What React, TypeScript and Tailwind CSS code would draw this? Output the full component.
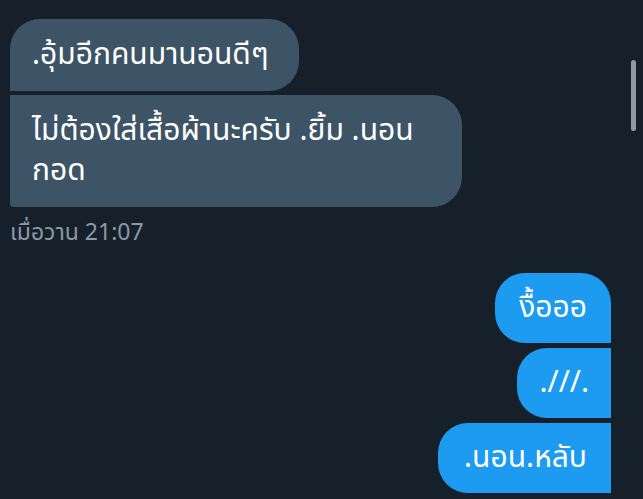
import React from "react";

const font = { fontFamily: 'Thonburi, "Noto Sans Thai", "Noto Sans", "DejaVu Sans", sans-serif' };

const App: React.FC = () => {
  return (
    <div className="relative w-full h-screen overflow-hidden bg-[#16202a]" style={font}>
      <div className="flex flex-col pt-[19px] pl-[10px] pr-[32px]">
        {/* Received group */}
        <div className="flex flex-col items-start gap-[4px]">
          <div className="bg-[#3d5466] text-white text-[30px] leading-[40px] pl-[22px] pr-[30px] py-[16px] rounded-[30px] rounded-bl-none">
            .อุ้มอีกคนมานอนดีๆ
          </div>
          <div className="bg-[#3d5466] text-white text-[30px] leading-[40px] pl-[22px] pr-[10px] py-[16px] rounded-[30px] rounded-tl-none rounded-bl-[4px] w-[452px]">
            ไม่ต้องใส่เสื้อผ้านะครับ .ยิ้ม .นอน
            <br />
            กอด
          </div>
        </div>
        <div className="mt-[14px] text-[23px] leading-[24px] text-[#8b98a5]">เมื่อวาน 21:07</div>

        {/* Sent group */}
        <div className="mt-[28px] flex flex-col items-end gap-[5px]">
          <div className="bg-[#1d9bf0] text-white text-[30px] leading-[40px] px-[24px] py-[15px] rounded-[30px] rounded-br-none">
            งื้อออ
          </div>
          <div className="bg-[#1d9bf0] text-white text-[30px] leading-[40px] px-[22px] py-[15px] rounded-[30px] rounded-r-none">
            .///.
          </div>
          <div className="bg-[#1d9bf0] text-white text-[30px] leading-[40px] pl-[26px] pr-[24px] py-[15px] rounded-[30px] rounded-r-none">
            .นอน.หลับ
          </div>
        </div>
      </div>

      {/* Scrollbar thumb */}
      <div className="absolute right-[7px] top-[60px] w-[5px] h-[71px] rounded-full bg-[#8e9aa5]" />
    </div>
  );
};

export default App;
